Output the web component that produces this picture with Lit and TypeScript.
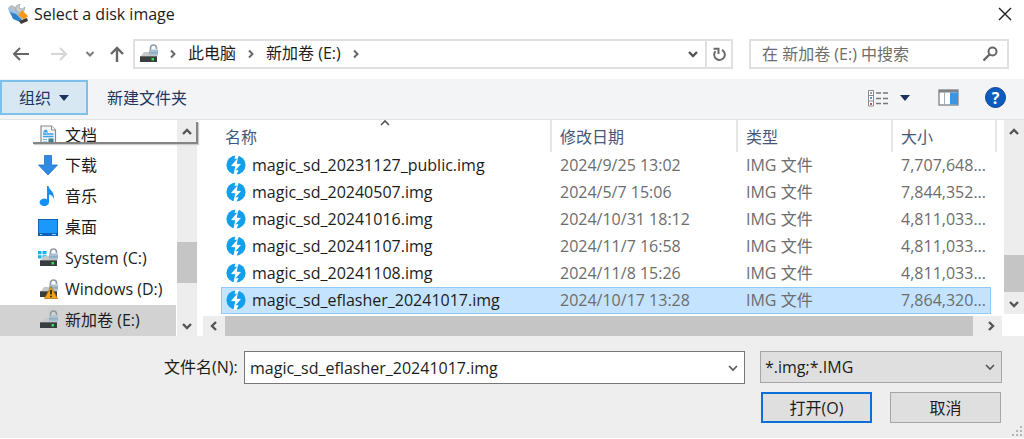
import { LitElement, html, css, svg, nothing } from "lit";
import { customElement } from "lit/decorators.js";
import { classMap } from "lit/directives/class-map.js";

type Place = { name: string; icon: unknown; selected?: boolean };
type FileRow = { name: string; date: string; size: string; selected?: boolean };

const FILES: FileRow[] = [
  { name: "magic_sd_20231127_public.img", date: "2024/9/25 13:02", size: "7,707,648..." },
  { name: "magic_sd_20240507.img", date: "2024/5/7 15:06", size: "7,844,352..." },
  { name: "magic_sd_20241016.img", date: "2024/10/31 18:12", size: "4,811,033..." },
  { name: "magic_sd_20241107.img", date: "2024/11/7 16:58", size: "4,811,033..." },
  { name: "magic_sd_20241108.img", date: "2024/11/8 15:26", size: "4,811,033..." },
  { name: "magic_sd_eflasher_20241017.img", date: "2024/10/17 13:28", size: "7,864,320...", selected: true },
];

const driveBody = svg`
  <path d="M3 12 L6 8 H17 L19 12 Z" fill="#c9c9c9"/>
  <rect x="2" y="12" width="17" height="6" fill="#3a3d3f"/>
  <rect x="2" y="12" width="17" height="1" fill="#6a6d70"/>
  <rect x="13.500" y="14" width="2.500" height="2.500" fill="#3be04a"/>`;

const padlock = svg`
  <path d="M12.500 6 V4 A3 3 0 0 1 18.500 4 V5" fill="none" stroke="#8e9aa3" stroke-width="1.600"/>
  <rect x="11" y="5.500" width="9" height="6" fill="#a9c0d0"/>
  <rect x="11" y="8" width="9" height="1.500" fill="#8fabc0"/>`;

const icon = (body: unknown, w = 20, h = 20) =>
  html`<svg width=${w} height=${h} viewBox="0 0 ${w} ${h}" aria-hidden="true">${body}</svg>`;

const icons = {
  app: icon(svg`
    <path d="M0 4 L5 3 L10 7 L15 14 L12 17 L5 14 L1 8 Z" fill="#9cc3e6"/>
    <path d="M0 3 L4 1 L9 4 L6 7 Z" fill="#b9bec2"/>
    <path d="M8 2 L12 0 L11 4 L14 5 L17 3 L16 7 L12 9 L8 7 Z" fill="#c9ced2" stroke="#8f979c" stroke-width="0.600"/>
    <path d="M2 8 L8 10 L14 16 L12 18 L5 15 Z" fill="#2f7fc9"/>
    <path d="M14 6 L20 12 L16 16 L10 11 Z" fill="#f39a1d"/>
    <path d="M11 17 L19 14 L20 17 L13 20 Z" fill="#3f3a36"/>`),
  back: icon(svg`<path d="M18 10 H3 M9 4 L3 10 L9 16" fill="none" stroke="#666" stroke-width="2"/>`),
  forward: icon(svg`<path d="M2 10 H17 M11 4 L17 10 L11 16" fill="none" stroke="#d6d6d6" stroke-width="2"/>`),
  up: icon(svg`<path d="M10 18 V4 M4 10 L10 4 L16 10" fill="none" stroke="#666" stroke-width="2.400"/>`),
  recent: icon(svg`<path d="M1.500 3 L5 6.500 L8.500 3" fill="none" stroke="#7b7b7b" stroke-width="2"/>`, 10, 10),
  crumb: icon(svg`<path d="M3 1.500 L6.500 5 L3 8.500" fill="none" stroke="#666" stroke-width="2"/>`, 10, 10),
  close: icon(svg`<path d="M1 1 L13 13 M13 1 L1 13" fill="none" stroke="#222" stroke-width="1.400"/>`, 14, 14),
  refresh: icon(svg`
    <path d="M3.500 4.200 A5.300 5.300 0 1 0 10 3" fill="none" stroke="#6a6a6a" stroke-width="2"/>
    <path d="M1.500 1.800 H6.500 V7" fill="none" stroke="#6a6a6a" stroke-width="2"/>`, 14, 14),
  search: icon(svg`
    <circle cx="10.500" cy="5.500" r="4" fill="none" stroke="#666" stroke-width="2"/>
    <path d="M7.500 8.500 L1.500 14.500" stroke="#666" stroke-width="2.400"/>`, 16, 16),
  view: icon(svg`
    <path d="M1.500 1.500 H6.500 V17 H1.500 Z M1.500 6.500 H6.500 M1.500 12 H6.500" fill="#fff" stroke="#8b8b8b"/>
    <rect x="3" y="3" width="2" height="2" fill="#7fae7f"/>
    <rect x="3" y="8" width="2" height="2" fill="#4d94e0"/>
    <rect x="3" y="14" width="2" height="2" fill="#e0504d"/>
    <path d="M9 4 H14 M16 4 H21 M9 9.500 H14 M16 9.500 H21 M9 14.500 H14 M16 14.500 H21" stroke="#777" stroke-width="1.500"/>`, 22, 18),
  preview: icon(svg`
    <rect x="1" y="1" width="19" height="15" fill="#fff" stroke="#858a8f" stroke-width="1.400"/>
    <rect x="1" y="1" width="19" height="2.500" fill="#7d8388"/>
    <path d="M6.500 3 V16" stroke="#a9adb0"/>
    <rect x="12" y="3.500" width="8" height="12" fill="#3a96e4"/>`, 21, 17),
  docs: icon(svg`
    <path d="M3 1 H13.500 L17.500 5 V19.500 H3 Z" fill="#f4f4f4" stroke="#8a8a8a" stroke-width="1.200"/>
    <path d="M13.500 1 V5 H17.500" fill="#fff" stroke="#8a8a8a"/>
    <path d="M5 7.500 C7 3 9 4 10 7.500 Z" fill="#3aa0ea"/>
    <path d="M5 9 H15.500 M5 11.500 H15.500" stroke="#3aa0ea" stroke-width="1.600"/>
    <path d="M5 14.500 H9 M5 17 H9" stroke="#6db8ee"/>
    <rect x="10.500" y="13.500" width="5" height="4" fill="#3f7f8f"/>`),
  down: icon(svg`<path d="M6.500 0.500 H13.500 V10 H19.500 L10 20 L0.500 10 H6.500 Z" fill="#2f8ae2" stroke="#2174c8" stroke-width="0.800"/>`),
  music: icon(svg`
    <path d="M9 0 H10.500 C11 4 17.500 6 15.500 13 C15 10 13.500 9 11 8.500 V16.500 A4.700 3.700 0 1 1 9 13.300 Z" fill="#1290f5"/>`),
  desktop: icon(svg`
    <rect x="0" y="2" width="20" height="17" fill="#0f62b5"/>
    <rect x="1" y="3" width="18" height="13" fill="#1b98fb"/>
    <path d="M2 17.500 H4 M14 17.500 H18" stroke="#9fd4ff"/>`),
  system: icon(svg`
    <path d="M0 3 H3.500 V6.300 H0 Z M4.500 3 H8.500 V6.300 H4.500 Z M0 7.300 H3.500 V10.500 H0 Z M4.500 7.300 H8.500 V10.500 H4.500 Z" fill="#19b1f0"/>
    ${driveBody}${padlock}`),
  warning: icon(svg`
    ${driveBody}${padlock}
    <path d="M13 7.500 L19.500 19.500 H6.500 Z" fill="#f5a416" stroke="#b06a00" stroke-width="0.700" stroke-linejoin="round"/>
    <path d="M13 11 V15.500 M13 16.700 V18.300" stroke="#222" stroke-width="1.700"/>`),
  drive: icon(svg`${driveBody}${padlock}`),
  disk: icon(svg`
    <circle cx="10" cy="10" r="9.600" fill="#129fec"/>
    <path d="M9.500 0 H13 L11.800 3.500 L8.500 4 Z M7.200 20 H10.500 L12.500 15 L8.500 15.500 Z" fill="#fff"/>
    <path d="M11.800 3 L5 11 L9.300 11.300 L8 17 L15 9 L10.800 8.700 Z" fill="#fff"/>`),
};

const chevron = (dir: "up" | "down" | "left" | "right", bold = true) => {
  const d = {
    up: "M2 8 L6 4 L10 8",
    down: "M2 4 L6 8 L10 4",
    left: "M8 2 L4 6 L8 10",
    right: "M4 2 L8 6 L4 10",
  }[dir];
  return icon(svg`<path d=${d} fill="none" stroke="#555" stroke-width=${bold ? 2.4 : 1.6}/>`, 12, 12);
};

const caret = html`<svg width="10" height="6" viewBox="0 0 10 6" aria-hidden="true"><path d="M0 0 H10 L5 6 Z" fill="#1b315e"/></svg>`;

const PLACES: Place[] = [
  { name: "文档", icon: icons.docs },
  { name: "下载", icon: icons.down },
  { name: "音乐", icon: icons.music },
  { name: "桌面", icon: icons.desktop },
  { name: "System (C:)", icon: icons.system },
  { name: "Windows (D:)", icon: icons.warning },
  { name: "新加卷 (E:)", icon: icons.drive, selected: true },
];

@customElement("app-root")
export class AppRoot extends LitElement {
  static styles = css`
    :host {
      display: block;
      background: #fff;
      color: #1c1c1c;
      font: 16px/20px "Open Sans", "Noto Sans CJK SC", sans-serif;
    }
    * { box-sizing: border-box; }
    svg { display: block; flex: none; }
    button, input, select { font: inherit; color: inherit; margin: 0; padding: 0; border: 0; background: none; border-radius: 0; }
    button { display: flex; align-items: center; justify-content: center; }
    .dialog { position: relative; }
    .titlebar { display: flex; align-items: center; height: 28px; padding: 0 12px 0 8px; }
    .title { flex: 1; margin: 0 0 0 6px; font-size: 16px; font-weight: 400; }
    .nav { display: flex; align-items: center; height: 51px; padding: 0 15px 0 11px; }
    .arrows { display: flex; align-items: center; width: 122px; gap: 18px; }
    .arrows .recent { margin: 0 -6px 0 2px; }
    .arrows .recent svg { margin-left: -4px; }
    .address { display: flex; flex: 1; height: 30px; border: 2px solid #e0e0e0; }
    .crumbs { display: flex; align-items: center; flex: 1; padding-left: 3px; gap: 10px; }
    .crumbs .part { padding-bottom: 1px; }
    .address .drop { width: 24px; }
    .address .reload { width: 26px; border-left: 2px solid #e0e0e0; }
    .search { display: flex; align-items: center; width: 260px; margin-left: 16px; height: 30px; padding: 0 9px 0 11px; border: 2px solid #e0e0e0; }
    .search input { flex: 1; min-width: 0; outline: none; }
    .search input::placeholder { color: #6d6d6d; opacity: 1; }
    .toolbar { display: flex; align-items: center; height: 41px; padding: 0 18px 3px 0; background: #f3f4f6; border-bottom: 1px solid #e4e4e4; color: #1f3560; }
    .organize { width: 88px; height: 35px; gap: 8px; background: #d8e8f3; border: 2px solid #7dc1e8; }
    .newfolder { margin-left: 19px; }
    .tools { display: flex; align-items: center; margin-left: auto; }
    .tools .view { gap: 11px; margin-right: 28px; }
    .help { width: 21px; height: 21px; margin-left: 26px; border-radius: 50%; background: #0a5cc0; border: 1px solid #0b3f8c; color: #fff; font-weight: 700; }
    .body { display: flex; }
    .side { position: relative; display: flex; width: 197px; }
    .fold { position: absolute; left: 33px; right: -1px; top: 2px; height: 22px; border: solid #858585; border-width: 0 2px 2px 0; box-shadow: 1px 1px 1px #ccc; pointer-events: none; }
    .places { flex: 1; margin: 0; padding: 0; list-style: none; }
    .places a { display: flex; align-items: center; gap: 7px; height: 31px; padding: 0 0 1px 38px; margin-right: 1px; color: inherit; text-decoration: none; }
    .places li:first-child a { height: 30px; }
    .places .on { background: #d2d2d2; }
    .vbar { display: flex; flex-direction: column; width: 20px; background: #ededed; }
    .vbar .up { height: 24px; }
    .vbar .dn { height: 21px; }
    .thumb { background: #c5c5c5; }
    .grow1 { flex: 1; }
    .grow3 { flex: 3; }
    .side .thumb { height: 41px; }
    .files .thumb { height: 37px; margin-bottom: 1px; }
    .pane { display: flex; flex-direction: column; flex: 1; min-width: 0; margin-left: 6px; }
    .files { display: flex; }
    .listing { flex: 1; padding: 0 7px 0 18px; }
    table { width: 100%; border-spacing: 0; table-layout: fixed; }
    .c-date { width: 186px; }
    .c-type { width: 155px; }
    .c-size { width: 98px; }
    .c-end { width: 6px; }
    th { height: 32px; padding: 2px 0 0 8px; text-align: left; font-weight: 400; color: #45587a; border-right: 2px solid #e6e6e6; }
    th:first-child { padding-left: 4px; }
    th.size { border-right: 0; }
    th.end { padding: 0; }
    .sorted { display: flex; align-items: center; }
    .sort { margin: -28px auto 0; padding-right: 38px; }
    td { height: 27px; padding: 0 0 2px 8px; color: #6d6d6d; border: solid transparent; border-width: 1px 0; white-space: nowrap; }
    td.name { padding-left: 5px; color: #1c1c1c; }
    td.size { padding: 0 5px 2px 0; text-align: right; }
    .file { display: flex; align-items: center; gap: 6px; }
    .picked td:not(.end) { background: #c4e3fe; border-color: #90c8f6; }
    .picked td.name { border-left: 1px solid #90c8f6; padding-left: 4px; }
    .picked td.size { border-right: 1px solid #90c8f6; padding-right: 4px; }
    .hbar { display: flex; height: 20px; margin: 2px 22px 0 0; background: #ededed; }
    .hbar button { width: 22px; }
    .hbar .right { margin-left: 7px; }
    .footer { padding: 15px 22px 15px 164px; background: #eee; }
    .row { display: flex; align-items: flex-start; }
    .row label { width: 80px; line-height: 32px; }
    .combo { display: flex; flex: 1; height: 33px; border: 1px solid #777; background: #fff; }
    .combo input { flex: 1; min-width: 0; padding-left: 5px; outline: none; }
    .combo button { width: 22px; }
    .filter { display: grid; width: 242px; height: 32px; margin-left: 15px; }
    .filter select, .filter svg { grid-area: 1 / 1; }
    .filter select { appearance: none; padding-left: 4px; background: #dfdfdf; border: 1px solid #a6a6a6; }
    .filter svg { justify-self: end; align-self: center; margin-right: 6px; pointer-events: none; }
    .actions { display: flex; justify-content: flex-end; gap: 18px; margin-top: 8px; padding-right: 1px; }
    .actions button { width: 111px; height: 31px; background: #dfdfdf; border: 1px solid #a6a6a6; }
    .actions .open { border: 2px solid #0a70d8; }
    .grip { position: absolute; right: 1px; bottom: 1px; }
  `;

  private place(p: Place) {
    return html`<li><a href="#" class=${classMap({ on: !!p.selected })} aria-current=${p.selected ? "true" : nothing}>${p.icon}<span>${p.name}</span></a></li>`;
  }

  private file(f: FileRow) {
    return html`<tr class=${classMap({ picked: !!f.selected })}>
      <td class="name"><div class="file">${icons.disk}<span>${f.name}</span></div></td>
      <td>${f.date}</td>
      <td>IMG 文件</td>
      <td class="size">${f.size}</td>
      <td class="end"></td>
    </tr>`;
  }

  render() {
    return html`<div class="dialog">
      <header class="titlebar">
        ${icons.app}
        <h1 class="title">Select a disk image</h1>
        <button aria-label="关闭">${icons.close}</button>
      </header>
      <nav class="nav">
        <div class="arrows">
          <button aria-label="后退">${icons.back}</button>
          <button aria-label="前进">${icons.forward}</button>
          <button class="recent" aria-label="最近">${icons.recent}</button>
          <button aria-label="向上">${icons.up}</button>
        </div>
        <div class="address">
          <div class="crumbs">
            ${icons.drive}${icons.crumb}
            <button class="part">此电脑</button>${icons.crumb}
            <button class="part">新加卷 (E:)</button>${icons.crumb}
          </div>
          <button class="drop" aria-label="历史">${chevron("down")}</button>
          <button class="reload" aria-label="刷新">${icons.refresh}</button>
        </div>
        <div class="search">
          <input type="text" aria-label="搜索" placeholder="在 新加卷 (E:) 中搜索" />
          <button aria-label="搜索">${icons.search}</button>
        </div>
      </nav>
      <div class="toolbar">
        <button class="organize">组织${caret}</button>
        <button class="newfolder">新建文件夹</button>
        <div class="tools">
          <button class="view" aria-label="视图">${icons.view}${caret}</button>
          <button aria-label="预览窗格">${icons.preview}</button>
          <button class="help" aria-label="帮助">?</button>
        </div>
      </div>
      <main class="body">
        <aside class="side">
          <ul class="places">${PLACES.map((p) => this.place(p))}</ul>
          <div class="vbar">
            <button class="up" aria-label="向上滚动">${chevron("up")}</button>
            <div class="grow3"></div>
            <div class="thumb"></div>
            <div class="grow1"></div>
            <button class="dn" aria-label="向下滚动">${chevron("down")}</button>
          </div>
          <div class="fold"></div>
        </aside>
        <section class="pane">
          <div class="files">
            <div class="listing">
              <table>
                <colgroup><col /><col class="c-date" /><col class="c-type" /><col class="c-size" /><col class="c-end" /></colgroup>
                <thead>
                  <tr>
                    <th><div class="sorted">名称<span class="sort">${chevron("up", false)}</span></div></th>
                    <th>修改日期</th>
                    <th>类型</th>
                    <th class="size">大小</th>
                    <th class="end"></th>
                  </tr>
                </thead>
                <tbody>${FILES.map((f) => this.file(f))}</tbody>
              </table>
            </div>
            <div class="vbar">
              <button class="up" aria-label="向上滚动">${chevron("up")}</button>
              <div class="grow1"></div>
              <div class="thumb"></div>
              <button class="dn" aria-label="向下滚动">${chevron("down")}</button>
            </div>
          </div>
          <div class="hbar">
            <button aria-label="向左滚动">${chevron("left")}</button>
            <div class="thumb grow1"></div>
            <button class="right" aria-label="向右滚动">${chevron("right")}</button>
          </div>
        </section>
      </main>
      <footer class="footer">
        <div class="row">
          <label for="filename">文件名(N):</label>
          <div class="combo">
            <input id="filename" type="text" .value=${"magic_sd_eflasher_20241017.img"} />
            <button aria-label="展开">${chevron("down", false)}</button>
          </div>
          <div class="filter">
            <select aria-label="文件类型"><option>*.img;*.IMG</option></select>
            ${chevron("down", false)}
          </div>
        </div>
        <div class="actions">
          <button class="open">打开(O)</button>
          <button>取消</button>
        </div>
      </footer>
      <svg class="grip" width="12" height="12" viewBox="0 0 12 12" aria-hidden="true">
        <path d="M9 1h2v2h-2z M5 5h2v2h-2z M9 5h2v2h-2z M1 9h2v2h-2z M5 9h2v2h-2z M9 9h2v2h-2z" fill="#b5b5b5"/>
      </svg>
    </div>`;
  }
}
